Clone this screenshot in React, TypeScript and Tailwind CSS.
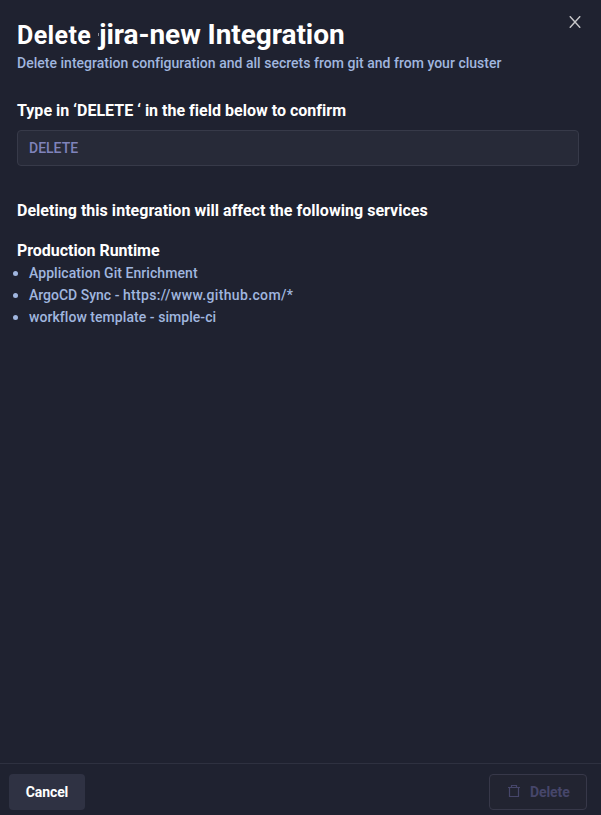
const services = [
  { parts: ["Application Git Enrichment"], tracking: "tracking-[0.06px]" },
  { parts: ["ArgoCD Sync - ", "https://www.github.com/*"], tracking: "tracking-normal" },
  { parts: ["workflow template - simple-ci"], tracking: "tracking-[0.05px]" },
];

function CloseIcon() {
  return (
    <svg className="h-3 w-3" viewBox="0 0 12 12" fill="none" stroke="#c6c6c8" strokeWidth="1.4">
      <path d="M.8.2 11.2 11.8M11.2.2.8 11.8" />
    </svg>
  );
}

function TrashIcon() {
  return (
    <svg className="h-[14px] w-3" viewBox="0 0 12 14" fill="none" stroke="#46466a" strokeWidth="1.2">
      <path d="M0 3.5h12M1.5 3.5v9h9v-9M3.5 3.5v-2h5v2" />
    </svg>
  );
}

export default function App() {
  return (
    <main className="flex h-[815px] w-[601px] flex-col overflow-hidden bg-[#1f2230] font-['Roboto',sans-serif] text-white">
      <header className="flex items-start justify-between pl-[17px] pr-5 pt-4">
        <div>
          <h1 className="flex h-[37px] items-baseline whitespace-nowrap font-bold leading-[38px]">
            <span className="text-[25px] tracking-[0.4px]">Delete</span>
            <span className="ml-[7px] h-[3px] w-px self-center bg-[#8b8d96]" />
            <span className="text-[28px] tracking-[-0.06px]">jira-new Integration</span>
          </h1>
          <p className="h-5 text-sm font-medium leading-5 tracking-[0.02px] text-[#a0b6df]">
            Delete integration configuration and all secrets from git and from your cluster
          </p>
        </div>
        <button aria-label="Close"><CloseIcon /></button>
      </header>
      <section className="flex grow flex-col px-[17px] pt-7 font-bold leading-5">
        <h2 className="tracking-[0.01px]">Type in ‘DELETE ‘ in the field below to confirm</h2>
        <input
          className="mt-[9px] h-9 w-[562px] rounded border border-[#373a49] bg-[#272a38] px-[11px] text-sm font-medium outline-none placeholder:text-[#7f83bb]"
          placeholder="DELETE"
        />
        <h2 className="mt-[35px] tracking-[0.03px]">Deleting this integration will affect the following services</h2>
        <h3 className="mt-5 tracking-[-0.04px]">Production Runtime</h3>
        <ul className="mt-px text-sm font-medium leading-[22px] text-[#a0b6df]">
          {services.map(({ parts, tracking }) => (
            <li key={parts[0]} className="-ml-1 flex items-center">
              <span className="mr-[11px] h-[5px] w-[5px] rounded-full bg-[#a0b6df]" />
              <span className={tracking}>
                {parts[0]}
                {parts[1] && <span className="tracking-[0.35px]">{parts[1]}</span>}
              </span>
            </li>
          ))}
        </ul>
      </section>
      <footer className="flex h-[52px] items-start justify-between border-t border-[#2e3140] pl-[9px] pr-[14px] pt-[10px] text-sm font-bold">
        <button className="h-9 w-[76px] rounded bg-[#2f3243] tracking-[-0.1px]">Cancel</button>
        <button className="flex h-9 w-[98px] items-center rounded border border-[#373849] bg-[#222431] pl-[18px] text-[#46466a]" disabled>
          <span className="-mt-0.5"><TrashIcon /></span>
          <span className="ml-[10px] tracking-[-0.1px]">Delete</span>
        </button>
      </footer>
    </main>
  );
}
